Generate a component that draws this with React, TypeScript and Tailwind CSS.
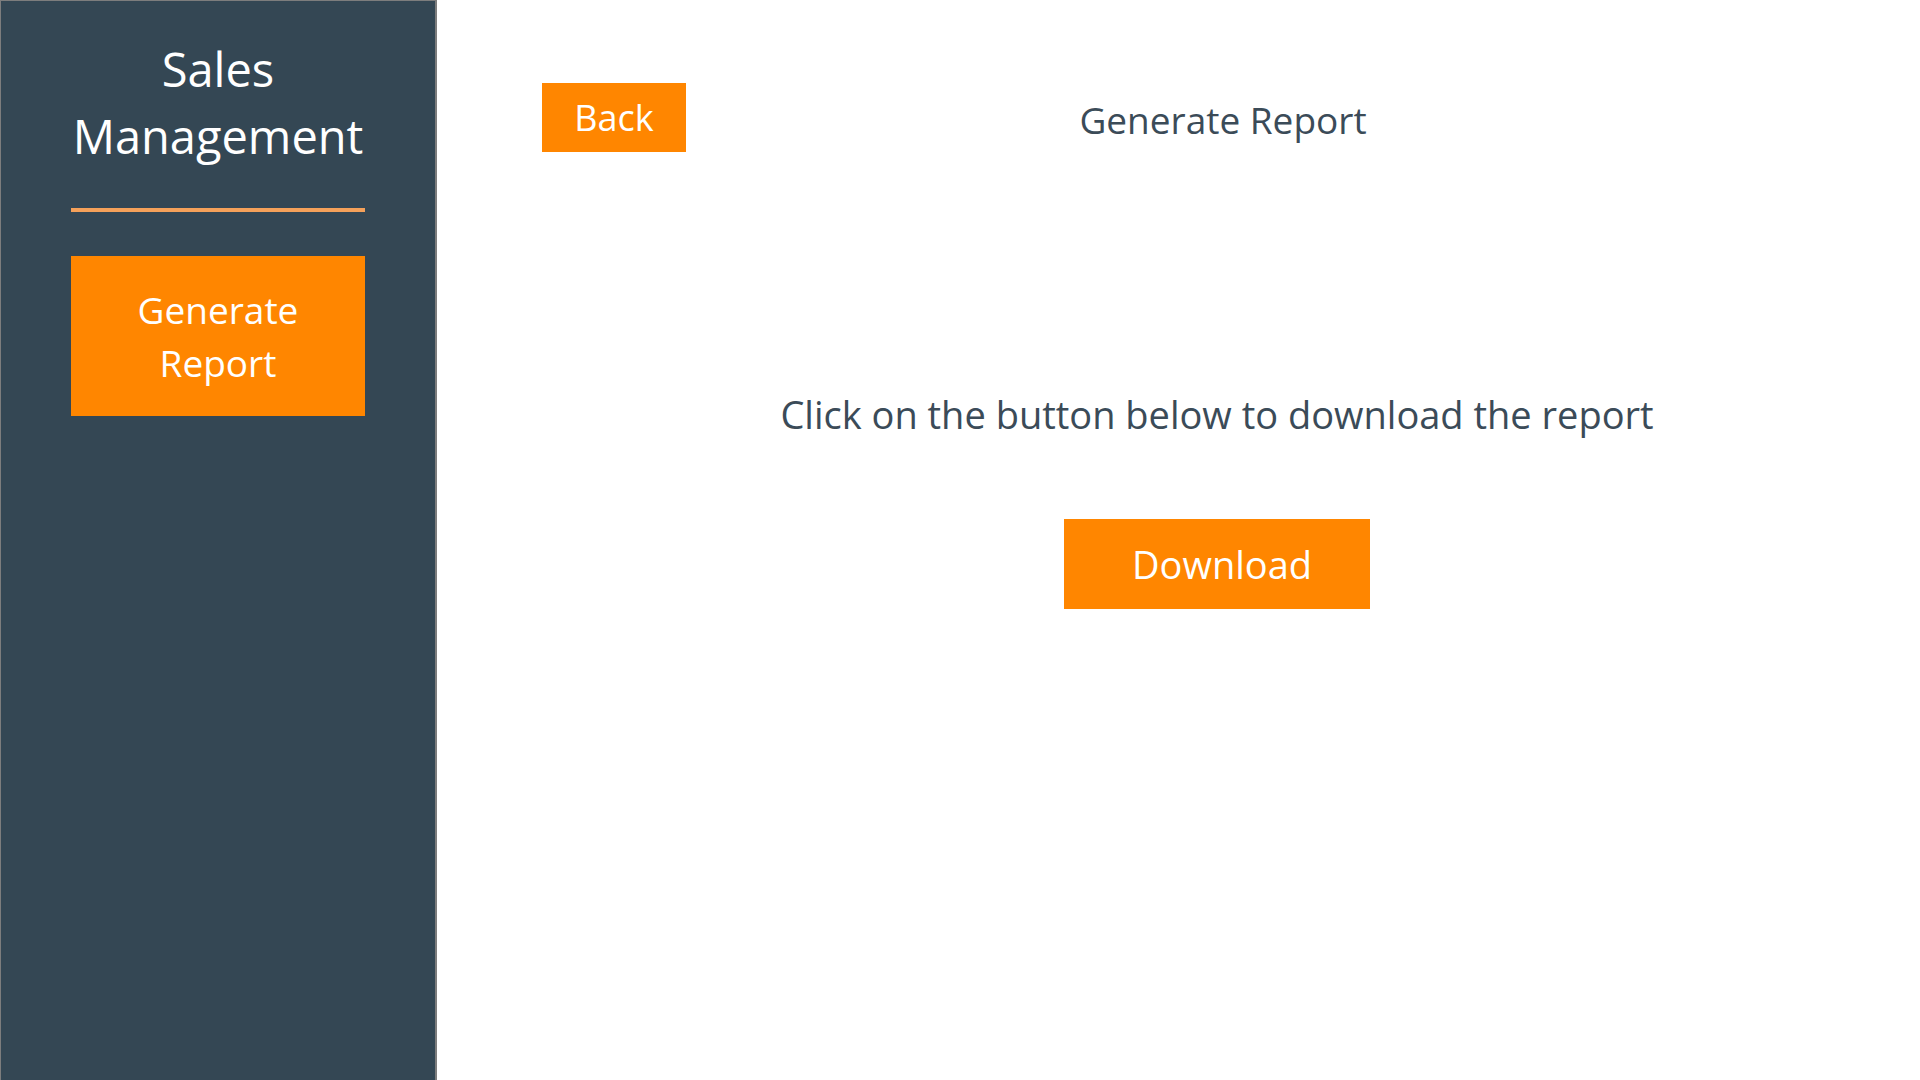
export default function App() {
  return (
    <div
      className="flex h-screen w-full bg-white"
      style={{ fontFamily: '"Open Sans", "Noto Sans", sans-serif' }}
    >
      <aside className="flex w-[437px] shrink-0 flex-col items-center border-t border-l border-r-2 border-[#7d7d7d] bg-[#344754]">
        <h1 className="mt-[35px] w-[300px] text-center text-[47px] leading-[67px] text-white">
          Sales Management
        </h1>
        <div className="mt-[38px] h-[4px] w-[294px] bg-[#f5a15a]" />
        <button className="mt-[44px] flex h-[160px] w-[294px] items-center justify-center bg-[#ff8600] px-10 text-center text-[37px] leading-[53px] text-white">
          Generate Report
        </button>
      </aside>

      <main className="flex flex-1 flex-col pl-[105px] pr-[16px] pt-[83px]">
        <div className="grid grid-cols-[1fr_auto_1fr] items-center">
          <div>
            <button className="flex h-[69px] w-[144px] items-center justify-center bg-[#ff8600] text-[36px] text-white">
              Back
            </button>
          </div>
          <h2 className="pt-[4px] text-[37px] text-[#3b4b58]">Generate Report</h2>
          <div />
        </div>

        <div className="mt-[238px] mr-[12px] flex flex-col items-center">
          <p className="text-[38px] leading-[48px] text-[#3b4b58]">
            Click on the button below to download the report
          </p>
          <button className="mt-[81px] flex h-[90px] w-[306px] items-center justify-center bg-[#ff8600] pl-[10px] text-[38px] text-white">
            Download
          </button>
        </div>
      </main>
    </div>
  )
}
